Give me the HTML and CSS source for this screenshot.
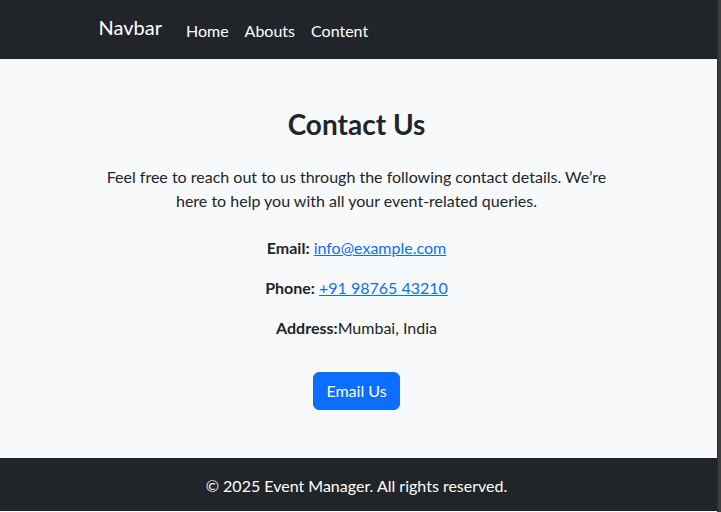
FILE: index.html
```html
<!DOCTYPE html>
<html lang="en">
<head>
<meta charset="utf-8">
<title>Contact Us</title>
<link rel="stylesheet" href="styles.css">
</head>
<body>
<div class="page">
  <nav class="navbar">
    <div class="container nav-inner">
      <a class="brand" href="#">Navbar</a>
      <ul class="nav-links">
        <li><a href="#">Home</a></li>
        <li><a href="#">Abouts</a></li>
        <li><a href="#">Content</a></li>
      </ul>
    </div>
  </nav>
  <main class="main">
    <div class="container content">
      <h1 class="title">Contact Us</h1>
      <p class="lead">Feel free to reach out to us through the following contact details. We’re here to help you with all your event-related queries.</p>
      <p class="detail"><strong>Email:</strong> <a href="#">info@example.com</a></p>
      <p class="detail"><strong>Phone:</strong> <a href="#">+91 98765 43210</a></p>
      <p class="detail"><strong>Address:</strong>Mumbai, India</p>
      <div class="actions"><a class="btn" href="#">Email Us</a></div>
    </div>
  </main>
  <footer class="footer">
    <div class="container">
      <p class="copy">© 2025 Event Manager. All rights reserved.</p>
    </div>
  </footer>
</div>
<div class="scrollbar"></div>
</body>
</html>
```
FILE: styles.css
```css
* { box-sizing: border-box; }
html, body { margin: 0; padding: 0; height: 100%; }
body {
  display: flex;
  font-family: Lato, "Open Sans", sans-serif;
  font-size: 16px;
  line-height: 24px;
  color: #212529;
  background: #f8f9fa;
  overflow: hidden;
}
.page { flex: 1; min-width: 0; }
.scrollbar {
  width: 4px;
  flex: none;
  background: #3d3d3d;
  border-left: 1px solid #2a2a2a;
}
.container {
  width: 540px;
  margin: 0 auto;
  padding: 0 12px;
  position: relative;
  left: -2px;
}
.navbar {
  background: #212529;
  height: 59px;
}
.nav-inner {
  display: flex;
  align-items: flex-start;
  height: 59px;
}
.brand {
  font-size: 20px;
  line-height: 30px;
  margin-top: 12px;
  margin-right: 16px;
  color: #fff;
  text-decoration: none;
}
.nav-links {
  display: flex;
  list-style: none;
  margin: 19px 0 0;
  padding: 0;
}
.nav-links a {
  display: block;
  padding: 0 8px;
  color: #fff;
  text-decoration: none;
}
.main {
  background: #f8f9fa;
  padding: 49px 0 0;
  height: 399px;
}
.content { text-align: center; }
.title {
  margin: 0 0 23px;
  font-size: 28px;
  line-height: 1.2;
  font-weight: 700;
}
.lead { margin: 0 0 23px; }
.detail { margin: 0 0 16px; }
.detail strong { font-weight: 700; }
.detail a { color: #0d6efd; text-decoration: underline; }
.actions { padding-top: 16px; }
.btn {
  display: inline-block;
  background: #0d6efd;
  border: 1px solid #0d6efd;
  color: #fff;
  padding: 6px 12px;
  border-radius: 6px;
  text-decoration: none;
  line-height: 24px;
}
.footer {
  background: #212529;
  color: #fff;
  padding: 16px 0 0;
  height: 53px;
  text-align: center;
}
.copy { margin: 0; }
```
